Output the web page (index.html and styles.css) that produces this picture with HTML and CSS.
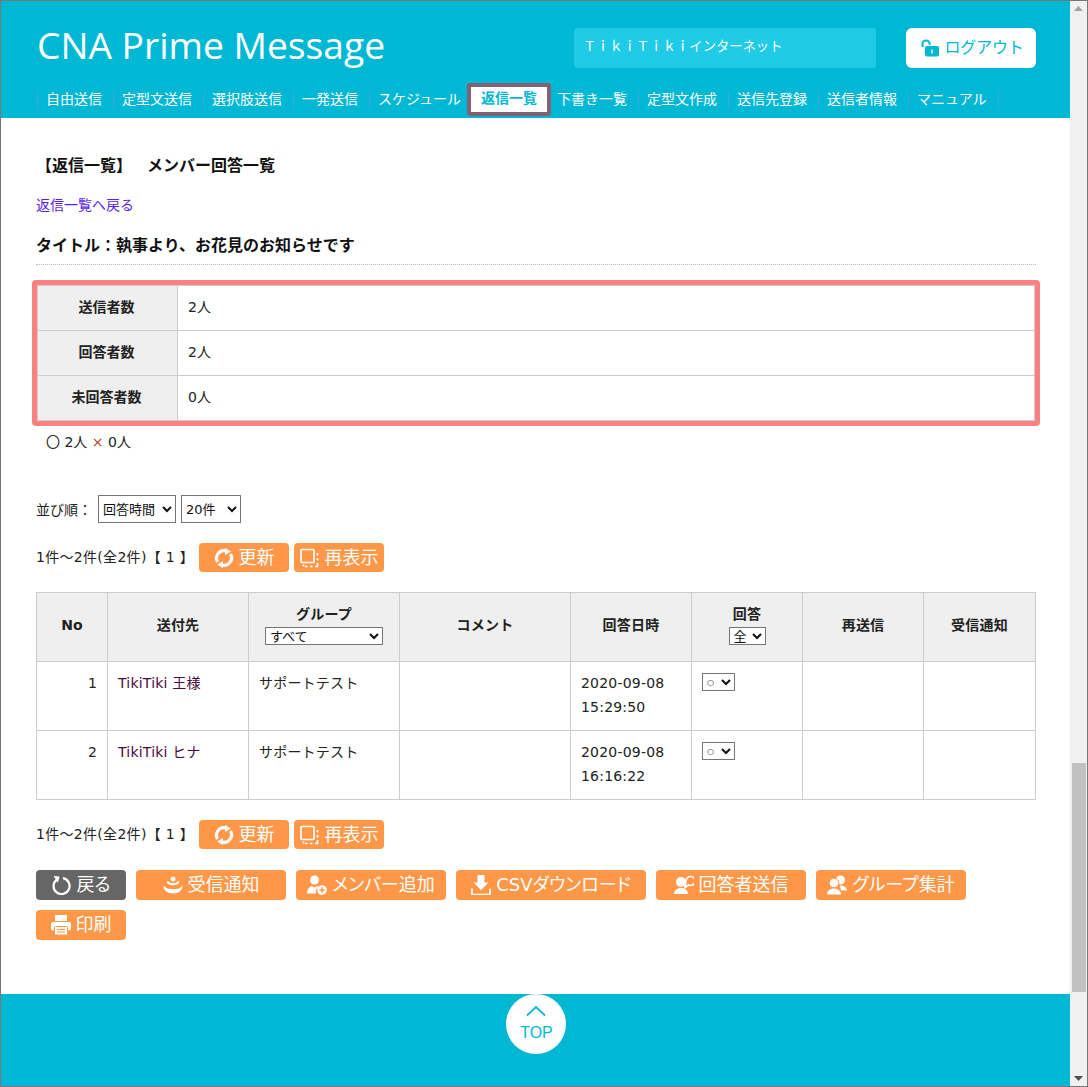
FILE: index.html
```html
<!DOCTYPE html>
<html lang="ja">
<head>
    <meta charset="UTF-8">
    <title>CNA Prime Message</title>
    <link rel="stylesheet" href="styles.css">
</head>
<body>

<div class="window">
    <div class="page">
        <header class="site-header">
            <div class="header-top">
                <div class="logo">CNA Prime Message</div>
                <div class="user-name">ＴｉｋｉＴｉｋｉインターネット</div>
                <a class="logout" href="#">
                    <svg class="logout-icon" viewBox="0 0 18 18"><path d="M1.500 8V5a3.600 3.600 0 0 1 7.200 0v1" fill="none" stroke="#00b8d4" stroke-width="2"/><rect x="4" y="7" width="14" height="10.500" rx="2" fill="#00b8d4"/><rect x="10.300" y="10.500" width="1.400" height="4" fill="#fff"/></svg>
                    <span class="btn-label">ログアウト</span>
                </a>
            </div>
            <nav class="nav">
                <a class="nav-item" href="#">自由送信</a>
                <a class="nav-item" href="#">定型文送信</a>
                <a class="nav-item" href="#">選択肢送信</a>
                <a class="nav-item" href="#">一発送信</a>
                <a class="nav-item" href="#">スケジュール</a>
                <a class="nav-item active" href="#">返信一覧</a>
                <a class="nav-item after-active" href="#">下書き一覧</a>
                <a class="nav-item" href="#">定型文作成</a>
                <a class="nav-item" href="#">送信先登録</a>
                <a class="nav-item" href="#">送信者情報</a>
                <a class="nav-item last" href="#">マニュアル</a>
            </nav>
        </header>

        <main class="content">
            <h2 class="page-title">【返信一覧】　<span class="sub-title">メンバー回答一覧</span></h2>
            <p class="back-link"><a href="#">返信一覧へ戻る</a></p>
            <h3 class="msg-title">タイトル：執事より、お花見のお知らせです</h3>

            <div class="summary-box">
                <table class="summary">
                    <tr><th>送信者数</th><td>2人</td></tr>
                    <tr><th>回答者数</th><td>2人</td></tr>
                    <tr><th>未回答者数</th><td>0人</td></tr>
                </table>
            </div>
            <p class="tally">〇 2人 <span class="cross">×</span> 0人</p>

            <div class="sort-row">
                <span class="sort-label">並び順：</span>
                <select class="sel-order"><option>回答時間</option></select>
                <select class="sel-count"><option>20件</option></select>
            </div>

            <div class="pager-row">
                <span class="pager-text">1件～2件(全2件)【 1 】</span>
                <a class="btn" href="#">
                    <svg class="icon" viewBox="0 0 20 20"><path d="M3.500 14A7.500 7.500 0 0 1 12 3M16.500 6A7.500 7.500 0 0 1 8 17" fill="none" stroke="#fff" stroke-width="3.200"/><path d="M11 0l6 3.500-6 3.500zM9 13l-6 3.500L9 20z" fill="#fff"/></svg>
                    <span class="btn-label">更新</span>
                </a>
                <a class="btn" href="#">
                    <svg class="icon" viewBox="0 0 20 20"><rect x="1" y="1.500" width="13" height="13" rx="1" fill="none" stroke="#fff" stroke-width="1.700"/><path d="M17.500 5v2.500M17.500 10v2.500M17.500 15v3.500H15M12.500 18.500H10M7.500 18.500H5M3.500 16.500v2" fill="none" stroke="#fff" stroke-width="1.700"/></svg>
                    <span class="btn-label">再表示</span>
                </a>
            </div>

            <table class="list">
                <colgroup>
                    <col class="c-no"><col class="c-to"><col class="c-group"><col class="c-comment">
                    <col class="c-date"><col class="c-answer"><col class="c-resend"><col class="c-notice">
                </colgroup>
                <thead>
                    <tr>
                        <th>No</th>
                        <th>送付先</th>
                        <th>グループ<br><select class="sel-group"><option>すべて</option></select></th>
                        <th>コメント</th>
                        <th>回答日時</th>
                        <th>回答<br><select class="sel-answer"><option>全</option></select></th>
                        <th>再送信</th>
                        <th>受信通知</th>
                    </tr>
                </thead>
                <tbody>
                    <tr>
                        <td class="num">1</td>
                        <td><a class="name" href="#">TikiTiki 王様</a></td>
                        <td>サポートテスト</td>
                        <td></td>
                        <td>2020-09-08<br>15:29:50</td>
                        <td><select class="sel-mark"><option>○</option></select></td>
                        <td></td>
                        <td></td>
                    </tr>
                    <tr>
                        <td class="num">2</td>
                        <td><a class="name" href="#">TikiTiki ヒナ</a></td>
                        <td>サポートテスト</td>
                        <td></td>
                        <td>2020-09-08<br>16:16:22</td>
                        <td><select class="sel-mark"><option>○</option></select></td>
                        <td></td>
                        <td></td>
                    </tr>
                </tbody>
            </table>

            <div class="pager-row bottom">
                <span class="pager-text">1件～2件(全2件)【 1 】</span>
                <a class="btn" href="#">
                    <svg class="icon" viewBox="0 0 20 20"><path d="M3.500 14A7.500 7.500 0 0 1 12 3M16.500 6A7.500 7.500 0 0 1 8 17" fill="none" stroke="#fff" stroke-width="3.200"/><path d="M11 0l6 3.500-6 3.500zM9 13l-6 3.500L9 20z" fill="#fff"/></svg>
                    <span class="btn-label">更新</span>
                </a>
                <a class="btn" href="#">
                    <svg class="icon" viewBox="0 0 20 20"><rect x="1" y="1.500" width="13" height="13" rx="1" fill="none" stroke="#fff" stroke-width="1.700"/><path d="M17.500 5v2.500M17.500 10v2.500M17.500 15v3.500H15M12.500 18.500H10M7.500 18.500H5M3.500 16.500v2" fill="none" stroke="#fff" stroke-width="1.700"/></svg>
                    <span class="btn-label">再表示</span>
                </a>
            </div>

            <div class="actions">
                <a class="btn wide-90 gray" href="#">
                    <svg class="icon" viewBox="0 0 20 20"><path d="M6 4.500a8 8 0 1 0 6-1.300" fill="none" stroke="#fff" stroke-width="2.200"/><path d="M2.500 1l6 .5-1.500 6z" fill="#fff"/></svg>
                    <span class="btn-label">戻る</span>
                </a>
                <a class="btn wide-150" href="#">
                    <svg class="icon" viewBox="0 0 20 20"><circle cx="10" cy="4" r="2.500" fill="#fff"/><path d="M4.500 6.500c1 3.500 10 3.500 11 0" fill="none" stroke="#fff" stroke-width="2"/><path d="M.5 10.500c2.500 3 5 3.500 9.500 3.500s7-.5 9.500-3.500c.5 4.500-4 8-9.500 8s-10-3.500-9.500-8z" fill="#fff"/></svg>
                    <span class="btn-label">受信通知</span>
                </a>
                <a class="btn wide-150" href="#">
                    <svg class="icon" viewBox="0 0 20 20"><circle cx="7.500" cy="5" r="4.500" fill="#fff"/><path d="M0 18.500c0-4 2.500-7 5-7.500l2.500 1.500L10 11l1.500 1a6 6 0 0 0-2.500 6.500z" fill="#fff"/><circle cx="15" cy="15" r="4.800" fill="#fff"/><path d="M15 12.300v5.400M12.300 15h5.400" stroke="#ff9748" stroke-width="1.500"/></svg>
                    <span class="btn-label">メンバー追加</span>
                </a>
                <a class="btn wide-190" href="#">
                    <svg class="icon" viewBox="0 0 20 20"><path d="M6.500 0h7v7.500h4L10 15 2.500 7.500h4z" fill="#fff"/><path d="M1 13.500v6h18v-6" fill="none" stroke="#fff" stroke-width="1.700"/></svg>
                    <span class="btn-label">CSVダウンロード</span>
                </a>
                <a class="btn wide-150" href="#">
                    <svg class="icon" viewBox="0 0 20 20"><circle cx="7" cy="7" r="5" fill="#fff"/><path d="M0 19c0-3.500 3-6 7-6s7 2.500 7 6z" fill="#fff"/><path d="M12 6a4.500 4.500 0 1 1 2.500 4L11 12.500z" fill="#ff9748" stroke="#fff" stroke-width="1.600"/></svg>
                    <span class="btn-label">回答者送信</span>
                </a>
                <a class="btn wide-150" href="#">
                    <svg class="icon" viewBox="0 0 20 20"><circle cx="13.500" cy="5" r="4.500" fill="#fff"/><path d="M13 10.500c4 0 7 2 7 5h-6z" fill="#fff"/><circle cx="7" cy="8" r="4.800" fill="#fff" stroke="#ff9748"/><path d="M0 19.500c0-3.500 3-6 7-6s7 2.500 7 6z" fill="#fff"/></svg>
                    <span class="btn-label">グループ集計</span>
                </a>
                <a class="btn wide-90" href="#">
                    <svg class="icon" viewBox="0 0 20 20"><path d="M4 0h12v6H4z" fill="#fff"/><rect y="7" width="20" height="8.500" rx="2" fill="#fff"/><rect x="3.500" y="11.500" width="13" height="8.500" rx="1" fill="#fff" stroke="#ff9748"/><path d="M6 14.500h8M6 17h8" stroke="#ff9748"/></svg>
                    <span class="btn-label">印刷</span>
                </a>
            </div>
        </main>

        <footer class="site-footer">
            <a class="to-top" href="#">
                <svg class="to-top-icon" viewBox="0 0 20 10"><path d="M1 9.500L10 1l9 8.500" fill="none" stroke="#00b8d4" stroke-width="1.800"/></svg>
                <span class="to-top-label">TOP</span>
            </a>
        </footer>
    </div>

    <div class="scrollbar">
        <svg class="arrow" viewBox="0 0 9 5"><path d="M0 5L4.500 0 9 5z" fill="#a3a3a3"/></svg>
        <div class="track"><div class="thumb"></div></div>
        <svg class="arrow" viewBox="0 0 9 5"><path d="M0 0L4.500 5 9 0z" fill="#505050"/></svg>
    </div>
</div>

</body>
</html>
```

FILE: styles.css
```css
* {
    box-sizing: border-box;
}

html, body {
    margin: 0;
    padding: 0;
    background: #fff;
}

body {
    font-family: "DejaVu Sans", "Noto Sans CJK JP", sans-serif;
    font-size: 14px;
    color: #222;
    overflow: hidden;
}

.window {
    display: flex;
    width: 1088px;
    height: 1087px;
    border: 1px solid #777;
    overflow: hidden;
}

.page {
    flex: 1;
    display: flex;
    flex-direction: column;
    min-width: 0;
}

/* header */
.site-header {
    height: 117px;
    background: #00b8d4;
    padding: 27px 34px 0 36px;
}

.header-top {
    display: flex;
    align-items: center;
    height: 40px;
}

.logo {
    width: 537px;
    padding-bottom: 6px;
    font-family: "Open Sans", sans-serif;
    font-size: 37.2px;
    color: #fff;
    line-height: 36px;
}

.user-name {
    width: 302px;
    height: 40px;
    padding-left: 9px;
    background: #1fcbe6;
    border-radius: 4px;
    color: #fff;
    line-height: 38px;
    font-size: 13.3px;
    white-space: nowrap;
}

.logout {
    display: flex;
    align-items: center;
    justify-content: center;
    gap: 5px;
    width: 130px;
    height: 40px;
    margin-left: 30px;
    padding-left: 3px;
    background: #fff;
    border-radius: 6px;
    color: #00b8d4;
    font-size: 16px;
    letter-spacing: -0.2px;
    text-decoration: none;
}

.logout .btn-label {
    padding-bottom: 4px;
}

.logout-icon {
    width: 18px;
    height: 18px;
}

.nav {
    display: flex;
    align-items: center;
    height: 33px;
    margin-top: 15px;
}

.nav-item {
    height: 18px;
    padding: 0 11px 0 8px;
    border-left: 1px solid #3fa5e0;
    color: #fff;
    line-height: 16px;
    font-size: 14px;
    text-decoration: none;
    white-space: nowrap;
}

.nav-item.active {
    height: 33px;
    margin-left: -5px;
    padding: 0 10px;
    border: 4px solid #836073;
    border-radius: 3px;
    background: #fff;
    color: #00b8d4;
    font-weight: bold;
    line-height: 23px;
}

.nav-item.after-active {
    padding: 0 11px 0 6px;
    border-left: 0;
}

.nav-item.last {
    border-right: 1px solid #3fa5e0;
}

/* content */
.content {
    flex: 1;
    padding: 0 34px 0 35px;
}

.page-title {
    margin: 38px 0 0;
    font-size: 16px;
    line-height: 20px;
    font-weight: bold;
    color: #111;
}

.sub-title {
    margin-left: 7px;
}

.back-link {
    margin: 19px 0 0;
    line-height: 20px;
    font-size: 14px;
}

.back-link a {
    color: #5a1ff0;
    text-decoration: none;
}

.msg-title {
    margin: 19px 0 0;
    padding-bottom: 6px;
    border-bottom: 1px dotted #bbb;
    font-size: 16px;
    line-height: 24px;
    font-weight: bold;
    color: #111;
}

.summary-box {
    width: 1008px;
    margin: 15px 0 0 -4px;
    border: 5px solid #ff8080;
    border-radius: 4px;
}

.summary {
    width: 100%;
    border-collapse: collapse;
}

.summary th,
.summary td {
    height: 45px;
    padding: 0 10px 4px;
    border: 1px solid #ccc;
    border-top: 0;
    font-size: 14px;
}

.summary tr:first-child th,
.summary tr:first-child td {
    border-top: 1px solid #ccc;
}

.summary th {
    width: 140px;
    padding: 0 11px 4px 9px;
    background: #efefef;
    font-weight: bold;
    text-align: center;
}

.summary td {
    text-align: left;
}

.tally {
    margin: 6px 0 0 10px;
    line-height: 20px;
    font-size: 14px;
}

.cross {
    color: #c0392b;
}

.sort-row {
    display: flex;
    align-items: center;
    height: 28px;
    margin-top: 43px;
    font-size: 14px;
}

.sort-label {
    width: 62px;
}

select {
    font-family: "DejaVu Sans", "Noto Sans CJK JP", sans-serif;
    font-size: 13px;
    background: #fff;
    color: #111;
}

.sel-order {
    width: 78px;
    height: 28px;
}

.sel-count {
    width: 60px;
    height: 28px;
    margin-left: 5px;
}

.pager-row {
    display: flex;
    align-items: center;
    gap: 5px;
    height: 29px;
    margin-top: 20px;
}

.pager-text {
    width: 158px;
    padding-bottom: 4px;
    font-size: 14px;
    letter-spacing: 0.3px;
    white-space: nowrap;
}

.btn {
    display: flex;
    align-items: center;
    justify-content: center;
    gap: 5px;
    width: 90px;
    height: 29px;
    background: #ff9748;
    border-radius: 4px;
    color: #fff;
    font-size: 18px;
    font-feature-settings: "palt";
    text-decoration: none;
    white-space: nowrap;
}

.btn-label {
    padding-bottom: 4px;
}

.btn.gray {
    background: #666;
}

.icon {
    width: 20px;
    height: 20px;
    flex: none;
}

.list {
    width: 1000px;
    margin-top: 20px;
    table-layout: fixed;
    border-collapse: collapse;
}

.c-no { width: 71px; }
.c-to { width: 141px; }
.c-group { width: 151px; }
.c-comment { width: 171px; }
.c-date { width: 121px; }
.c-answer { width: 111px; }
.c-resend { width: 121px; }
.c-notice { width: 112px; }

.list th,
.list td {
    height: 69px;
    padding: 9px 10px 8px;
    border: 1px solid #ccc;
    font-size: 14px;
    letter-spacing: 0.2px;
    line-height: 24px;
    vertical-align: top;
}

.list th {
    padding: 0 0 4px;
    background: #efefef;
    line-height: 22px;
    font-weight: bold;
    text-align: center;
    vertical-align: middle;
}

.list .num {
    text-align: right;
}

.name {
    color: #4b0a3c;
    text-decoration: none;
}

.sel-group {
    display: inline-block;
    width: 118px;
    height: 18px;
    margin-top: 2px;
    padding: 0;
}

.sel-answer {
    display: inline-block;
    width: 37px;
    height: 18px;
    margin-top: 2px;
    padding: 0;
}

.sel-mark {
    display: block;
    width: 33px;
    height: 18px;
    padding: 0;
    margin-top: 2px;
    font-size: 8px;
}

.actions {
    display: flex;
    flex-wrap: wrap;
    gap: 10px;
    margin-top: 21px;
}

.actions .btn {
    height: 30px;
}

.actions .btn-label {
    padding-bottom: 5px;
}

.actions .wide-90 { width: 90px; }
.actions .wide-150 { width: 150px; }
.actions .wide-190 { width: 190px; }

/* footer */
.site-footer {
    display: flex;
    justify-content: center;
    height: 92px;
    background: #00b8d4;
}

.to-top {
    display: flex;
    flex-direction: column;
    align-items: center;
    width: 60px;
    height: 60px;
    padding-top: 12px;
    border-radius: 50%;
    background: #fff;
    color: #00b8d4;
    font-family: "Liberation Sans", sans-serif;
    font-size: 16px;
    line-height: 20px;
    text-decoration: none;
}

.to-top-icon {
    width: 20px;
    height: 10px;
    margin-bottom: 7px;
}

.to-top-label {
    margin-left: 2px;
}

/* scrollbar */
.scrollbar {
    display: flex;
    flex-direction: column;
    align-items: center;
    justify-content: space-between;
    width: 17px;
    background: #f0f0f0;
    padding: 5px 0;
}

.arrow {
    width: 9px;
    height: 5px;
    flex: none;
}

.track {
    flex: 1;
    display: flex;
    align-items: flex-end;
    width: 100%;
    padding: 0 1px 0 2px;
}

.thumb {
    width: 100%;
    height: 229px;
    margin-bottom: 84px;
    background: #c0c0c0;
}
```
